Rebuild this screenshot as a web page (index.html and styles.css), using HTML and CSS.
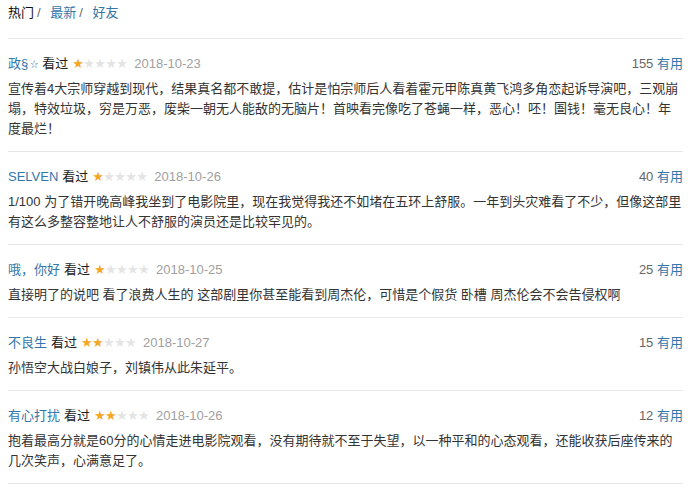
FILE: index.html
```html
<!DOCTYPE html>
<html lang="zh-CN">

<head>
  <meta charset="UTF-8" />
  <meta name="viewport" content="width=device-width, initial-scale=1.0" />
  <title>短评</title>
  <link rel="stylesheet" href="styles.css">
</head>

<body>
  <div class="comments">
    <div class="tabs">
      <span class="tab active">热门</span><span class="sep">/</span>
      <a class="tab">最新</a><span class="sep">/</span>
      <a class="tab">好友</a>
    </div>

    <div class="comment">
      <div class="meta">
        <div class="info">
          <a class="name">政§<span class="badge">☆</span></a>
          <span class="seen">看过</span>
          <span class="stars"><i class="on">★</i><i>★</i><i>★</i><i>★</i><i>★</i></span>
          <span class="date">2018-10-23</span>
        </div>
        <div class="votes"><span class="count">155</span> <a class="useful">有用</a></div>
      </div>
      <p class="text">宣传着4大宗师穿越到现代，结果真名都不敢提，估计是怕宗师后人看着霍元甲陈真黄飞鸿多角恋起诉导演吧，三观崩塌，特效垃圾，穷是万恶，废柴一朝无人能敌的无脑片！首映看完像吃了苍蝇一样，恶心！呸！圄钱！毫无良心！年度最烂！</p>
    </div>

    <div class="comment">
      <div class="meta">
        <div class="info">
          <a class="name">SELVEN</a>
          <span class="seen">看过</span>
          <span class="stars"><i class="on">★</i><i>★</i><i>★</i><i>★</i><i>★</i></span>
          <span class="date">2018-10-26</span>
        </div>
        <div class="votes"><span class="count">40</span> <a class="useful">有用</a></div>
      </div>
      <p class="text">1/100 为了错开晚高峰我坐到了电影院里，现在我觉得我还不如堵在五环上舒服。一年到头灾难看了不少，但像这部里有这么多整容整地让人不舒服的演员还是比较罕见的。</p>
    </div>

    <div class="comment">
      <div class="meta">
        <div class="info">
          <a class="name">哦，你好</a>
          <span class="seen">看过</span>
          <span class="stars"><i class="on">★</i><i>★</i><i>★</i><i>★</i><i>★</i></span>
          <span class="date">2018-10-25</span>
        </div>
        <div class="votes"><span class="count">25</span> <a class="useful">有用</a></div>
      </div>
      <p class="text">直接明了的说吧 看了浪费人生的 这部剧里你甚至能看到周杰伦，可惜是个假货 卧槽 周杰伦会不会告侵权啊</p>
    </div>

    <div class="comment">
      <div class="meta">
        <div class="info">
          <a class="name">不良生</a>
          <span class="seen">看过</span>
          <span class="stars"><i class="on">★</i><i class="on">★</i><i>★</i><i>★</i><i>★</i></span>
          <span class="date">2018-10-27</span>
        </div>
        <div class="votes"><span class="count">15</span> <a class="useful">有用</a></div>
      </div>
      <p class="text">孙悟空大战白娘子，刘镇伟从此朱延平。</p>
    </div>

    <div class="comment">
      <div class="meta">
        <div class="info">
          <a class="name">有心打扰</a>
          <span class="seen">看过</span>
          <span class="stars"><i class="on">★</i><i class="on">★</i><i>★</i><i>★</i><i>★</i></span>
          <span class="date">2018-10-26</span>
        </div>
        <div class="votes"><span class="count">12</span> <a class="useful">有用</a></div>
      </div>
      <p class="text">抱着最高分就是60分的心情走进电影院观看，没有期待就不至于失望，以一种平和的心态观看，还能收获后座传来的几次笑声，心满意足了。</p>
    </div>
  </div>
</body>

</html>
```

FILE: styles.css
```css
* {
  box-sizing: border-box;
}

body {
  margin: 0;
  padding: 0;
  background-color: #ffffff;
  color: #333333;
  font-family: 'Liberation Sans', 'Noto Sans CJK SC', sans-serif;
  font-size: 13px;
}

a {
  color: #3377aa;
  text-decoration: none;
}

.comments {
  width: 685px;
  padding: 0 2px 0 8px;
}

.tabs {
  height: 39px;
  padding-top: 3px;
  line-height: 20px;
  border-bottom: 1px solid #e8e8e8;
}

.tab.active {
  color: #111111;
}

.sep {
  color: #666666;
  margin: 0 6px 0 3px;
}

.comment {
  padding: 15px 0 12px;
  border-bottom: 1px solid #e8e8e8;
}

.meta {
  display: flex;
  justify-content: space-between;
  align-items: center;
  height: 20px;
  line-height: 20px;
  margin-bottom: 5px;
}

.info {
  display: flex;
  align-items: center;
  gap: 4px;
}

.badge {
  font-size: 8px;
  margin-left: 2px;
  vertical-align: 1px;
}

.seen {
  color: #222222;
}

.stars {
  display: flex;
  font-family: 'DejaVu Sans', sans-serif;
  font-size: 13px;
  margin-right: 3px;
}

.stars i {
  font-style: normal;
  width: 11px;
  color: #e4e4e4;
}

.stars i.on {
  color: #f5a623;
}

.date {
  color: #a0a0a0;
}

.votes {
  color: #666666;
}

.text {
  margin: 0;
  width: 675px;
  line-height: 20px;
  color: #333333;
  word-break: break-all;
}
```
